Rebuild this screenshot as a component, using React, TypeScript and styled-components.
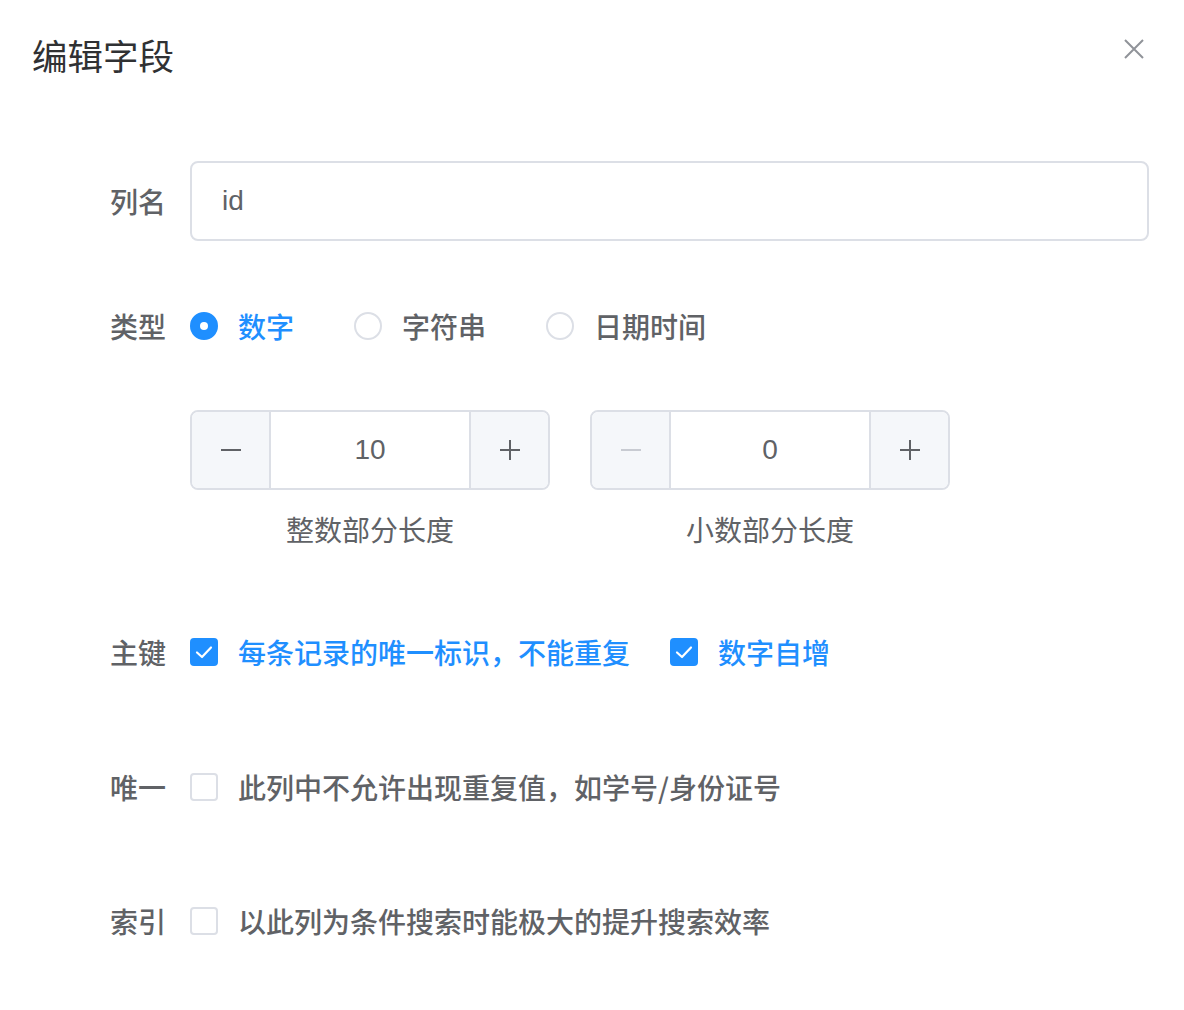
import React, { useState } from "react";
import styled, { createGlobalStyle } from "styled-components";

const BLUE = "#1f8fff";
const TEXT = "#606266";
const BORDER = "#dcdfe6";

const Global = createGlobalStyle`
  html, body { margin: 0; padding: 0; background: #fff; }
  body {
    font-family: "Helvetica Neue", "Liberation Sans", "Noto Sans CJK SC", sans-serif;
    -webkit-font-smoothing: antialiased;
  }
  * { box-sizing: border-box; }
`;

const Dialog = styled.div`
  width: 1184px;
  height: 1010px;
  background: #fff;
  display: flex;
  flex-direction: column;
`;

const Header = styled.div`
  display: flex;
  align-items: center;
  justify-content: space-between;
  padding: 28px 40px 0 32px;
`;

const Title = styled.h2`
  margin: 0;
  font-size: 35.5px;
  line-height: 54px;
  font-weight: 400;
  color: #303133;
  font-family: "Noto Sans CJK SC", sans-serif;
`;

const CloseButton = styled.button`
  border: 0;
  background: none;
  padding: 0;
  width: 22px;
  height: 22px;
  margin-top: -13px;
  margin-right: -1px;
  display: flex;
  align-items: center;
  justify-content: center;
  cursor: pointer;
`;

const Form = styled.form`
  display: flex;
  flex-direction: column;
  padding: 79px 35px 0 0;
`;

const Item = styled.div<{ $mb: number }>`
  display: flex;
  align-items: center;
  min-height: 80px;
  margin-bottom: ${(p) => p.$mb}px;
`;

const Label = styled.label`
  width: 190px;
  flex: 0 0 190px;
  padding-right: 24px;
  text-align: right;
  font-size: 28px;
  line-height: 78px;
  color: ${TEXT};
  font-weight: 500;
  font-family: "Noto Sans CJK SC", sans-serif;
`;

const Content = styled.div`
  flex: 1;
  display: flex;
  align-items: center;
`;

const TextInput = styled.input`
  width: 100%;
  height: 80px;
  border: 2px solid ${BORDER};
  border-radius: 8px;
  padding: 0 30px;
  font-size: 28px;
  color: ${TEXT};
  font-family: "Helvetica Neue", "Liberation Sans", sans-serif;
  outline: none;
`;

const RadioOption = styled.label<{ $checked: boolean }>`
  display: inline-flex;
  align-items: center;
  margin-right: 60px;
  cursor: pointer;
  font-size: 28px;
  line-height: 80px;
  font-family: "Noto Sans CJK SC", sans-serif;
  font-weight: 500;
  color: ${(p) => (p.$checked ? BLUE : TEXT)};
`;

const RadioCircle = styled.span<{ $checked: boolean }>`
  width: 28px;
  height: 28px;
  border-radius: 50%;
  border: 2px solid ${(p) => (p.$checked ? BLUE : BORDER)};
  background: ${(p) => (p.$checked ? BLUE : "#fff")};
  margin-right: 20px;
  display: flex;
  align-items: center;
  justify-content: center;
  &::after {
    content: "";
    width: 8px;
    height: 8px;
    border-radius: 50%;
    background: #fff;
    display: ${(p) => (p.$checked ? "block" : "none")};
  }
`;

const NumberGroup = styled.div`
  display: flex;
  gap: 40px;
`;

const NumberField = styled.div`
  display: flex;
  flex-direction: column;
  align-items: center;
  width: 360px;
`;

const Stepper = styled.div`
  display: flex;
  width: 360px;
  height: 80px;
  border: 2px solid ${BORDER};
  border-radius: 8px;
  overflow: hidden;
`;

const StepButton = styled.button<{ $side: "left" | "right"; $disabled?: boolean }>`
  width: 79px;
  flex: 0 0 79px;
  border: 0;
  ${(p) => (p.$side === "left" ? "border-right" : "border-left")}: 2px solid ${BORDER};
  background: #f5f7fa;
  display: flex;
  align-items: center;
  justify-content: center;
  padding: 0;
  cursor: ${(p) => (p.$disabled ? "not-allowed" : "pointer")};
  color: ${(p) => (p.$disabled ? "#c8cbd2" : TEXT)};
`;

const StepValue = styled.div`
  flex: 1;
  display: flex;
  align-items: center;
  justify-content: center;
  font-size: 28px;
  color: ${TEXT};
  font-family: "Helvetica Neue", "Liberation Sans", sans-serif;
`;

const Caption = styled.div`
  font-size: 28px;
  line-height: 78px;
  color: ${TEXT};
  font-family: "Noto Sans CJK SC", sans-serif;
`;

const CheckOption = styled.label<{ $checked: boolean }>`
  display: inline-flex;
  align-items: center;
  margin-right: 40px;
  cursor: pointer;
  font-size: 28px;
  line-height: 80px;
  font-family: "Noto Sans CJK SC", sans-serif;
  font-weight: 500;
  color: ${(p) => (p.$checked ? BLUE : TEXT)};
`;

const CheckBox = styled.span<{ $checked: boolean }>`
  width: 28px;
  height: 28px;
  border-radius: 4px;
  border: 2px solid ${(p) => (p.$checked ? BLUE : BORDER)};
  background: ${(p) => (p.$checked ? BLUE : "#fff")};
  margin-right: 20px;
  display: flex;
  align-items: center;
  justify-content: center;
`;

const Minus = () => (
  <svg width="22" height="22" viewBox="0 0 22 22">
    <line x1="1" y1="11" x2="21" y2="11" stroke="currentColor" strokeWidth="2" />
  </svg>
);

const Plus = () => (
  <svg width="22" height="22" viewBox="0 0 22 22">
    <line x1="1" y1="11" x2="21" y2="11" stroke="currentColor" strokeWidth="2" />
    <line x1="11" y1="1" x2="11" y2="21" stroke="currentColor" strokeWidth="2" />
  </svg>
);

const Tick = () => (
  <svg width="18" height="14" viewBox="0 0 18 14">
    <path d="M2 7.5 L7 12 L16 2.5" fill="none" stroke="#fff" strokeWidth="2.2" strokeLinecap="round" strokeLinejoin="round" />
  </svg>
);

function Check({ checked, label, onToggle }: { checked: boolean; label: string; onToggle: () => void }) {
  return (
    <CheckOption $checked={checked} onClick={onToggle}>
      <CheckBox $checked={checked}>{checked && <Tick />}</CheckBox>
      {label}
    </CheckOption>
  );
}

function NumberInput({ value, min, caption, onChange }: { value: number; min: number; caption: string; onChange: (v: number) => void }) {
  const atMin = value <= min;
  return (
    <NumberField>
      <Stepper>
        <StepButton type="button" $side="left" $disabled={atMin} onClick={() => !atMin && onChange(value - 1)}>
          <Minus />
        </StepButton>
        <StepValue>{value}</StepValue>
        <StepButton type="button" $side="right" onClick={() => onChange(value + 1)}>
          <Plus />
        </StepButton>
      </Stepper>
      <Caption>{caption}</Caption>
    </NumberField>
  );
}

export default function App() {
  const [type, setType] = useState("数字");
  const [intLen, setIntLen] = useState(10);
  const [decLen, setDecLen] = useState(0);
  const [pk, setPk] = useState(true);
  const [auto, setAuto] = useState(true);
  const [unique, setUnique] = useState(false);
  const [index, setIndex] = useState(false);

  return (
    <Dialog>
      <Global />
      <Header>
        <Title>编辑字段</Title>
        <CloseButton type="button" aria-label="关闭">
          <svg width="22" height="22" viewBox="0 0 22 22">
            <path d="M2 2 L20 20 M20 2 L2 20" stroke="#909399" strokeWidth="2" />
          </svg>
        </CloseButton>
      </Header>
      <Form onSubmit={(e) => e.preventDefault()}>
        <Item $mb={45}>
          <Label>列名</Label>
          <Content>
            <TextInput defaultValue="id" />
          </Content>
        </Item>
        <Item $mb={44}>
          <Label>类型</Label>
          <Content>
            {["数字", "字符串", "日期时间"].map((t) => (
              <RadioOption key={t} $checked={type === t} onClick={() => setType(t)}>
                <RadioCircle $checked={type === t} />
                {t}
              </RadioOption>
            ))}
          </Content>
        </Item>
        <Item $mb={44}>
          <Label />
          <Content>
            <NumberGroup>
              <NumberInput value={intLen} min={1} caption="整数部分长度" onChange={setIntLen} />
              <NumberInput value={decLen} min={0} caption="小数部分长度" onChange={setDecLen} />
            </NumberGroup>
          </Content>
        </Item>
        <Item $mb={55}>
          <Label>主键</Label>
          <Content>
            <Check checked={pk} label="每条记录的唯一标识，不能重复" onToggle={() => setPk(!pk)} />
            <Check checked={auto} label="数字自增" onToggle={() => setAuto(!auto)} />
          </Content>
        </Item>
        <Item $mb={54}>
          <Label>唯一</Label>
          <Content>
            <Check checked={unique} label="此列中不允许出现重复值，如学号/身份证号" onToggle={() => setUnique(!unique)} />
          </Content>
        </Item>
        <Item $mb={0}>
          <Label>索引</Label>
          <Content>
            <Check checked={index} label="以此列为条件搜索时能极大的提升搜索效率" onToggle={() => setIndex(!index)} />
          </Content>
        </Item>
      </Form>
    </Dialog>
  );
}
